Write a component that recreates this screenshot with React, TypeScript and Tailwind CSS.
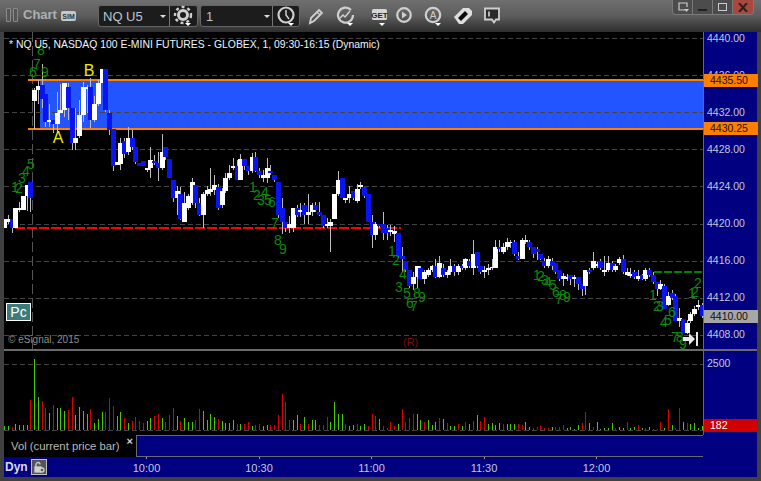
const font = "font-['Liberation_Sans',Arial,sans-serif]";

// [white?, body top, body bottom, wick high, wick low] in page pixels
const candles: number[][] = [
  [1, 219, 228], [1, 219, 222, 215, 224], [0, 219, 228, 219, 233], [1, 208, 228], [1, 208, 210, 202, 212], [1, 196, 210], [1, 185, 196, 185, 211], [0, 182, 198, 182, 212],
  [1, 90, 101, 88, 129], [1, 86, 90, 80, 104], [0, 85, 99, 64, 108], [0, 94, 122, 94, 127], [1, 120, 122, 104, 127], [0, 120, 124, 120, 133], [1, 113, 124, 92, 133], [1, 110, 113, 84, 113],
  [1, 83, 110, 83, 117], [0, 87, 108, 83, 120], [0, 108, 143, 108, 150], [1, 138, 143, 108, 150], [1, 115, 136, 100, 138], [1, 87, 115, 82, 122], [1, 87, 89, 85, 113], [0, 87, 120, 78, 128],
  [1, 104, 120, 96, 122], [1, 83, 104, 80, 106], [1, 69, 83], [0, 69, 110, 69, 112], [0, 113, 130, 110, 135], [0, 129, 166, 129, 171], [1, 162, 165], [1, 143, 164, 138, 170],
  [0, 141, 154, 138, 158], [1, 138, 152, 127, 155], [0, 138, 147, 130, 150], [0, 147, 162, 147, 164], [0, 163, 166], [0, 161, 166], [1, 168, 170, 168, 172], [1, 160, 168, 147, 178],
  [0, 161, 163, 155, 165], [0, 163, 168, 152, 181], [1, 152, 168, 134, 170], [0, 147, 157, 147, 160], [0, 159, 178], [0, 180, 198, 180, 202], [1, 191, 198, 186, 215], [0, 194, 219, 187, 220],
  [1, 203, 222, 192, 222], [1, 196, 208, 194, 210], [1, 182, 203, 178, 205], [0, 185, 203, 185, 208], [0, 203, 215, 198, 216], [1, 194, 215, 192, 228], [1, 190, 194, 186, 196], [1, 189, 192, 168, 196],
  [1, 185, 190, 175, 195], [0, 187, 208, 184, 210], [1, 191, 205, 188, 208], [1, 178, 191, 173, 193], [1, 173, 178, 165, 180], [1, 166, 168, 158, 170], [0, 166, 180, 160, 180], [1, 159, 180, 154, 180],
  [0, 159, 166, 159, 170], [0, 166, 171, 166, 175], [1, 157, 171, 153, 173], [0, 157, 171, 152, 172], [0, 171, 175, 168, 178], [1, 175, 178, 170, 182], [1, 168, 178, 158, 183], [0, 171, 173, 165, 175],
  [0, 175, 180, 175, 182], [0, 182, 215, 182, 218], [0, 208, 222, 198, 234], [0, 222, 228, 222, 232], [1, 224, 228, 216, 233], [1, 208, 228, 208, 232], [0, 208, 215, 205, 217], [1, 210, 212, 203, 217],
  [0, 205, 215, 203, 224], [1, 212, 215, 194, 224], [1, 205, 212, 203, 216], [0, 205, 210, 202, 212], [0, 212, 215, 202, 216], [0, 215, 226, 215, 228], [1, 224, 226, 218, 228], [1, 222, 226, 219, 252],
  [1, 194, 219, 194, 219], [1, 180, 194, 171, 196], [0, 178, 198, 178, 198], [1, 198, 200, 198, 203], [1, 194, 198, 186, 203], [0, 191, 198, 191, 200], [1, 189, 201, 184, 203], [1, 185, 187, 182, 189],
  [0, 187, 196, 187, 198], [0, 194, 222, 194, 222], [0, 222, 235, 215, 248], [1, 224, 235, 222, 240], [0, 224, 226, 224, 228], [0, 224, 233, 212, 240], [0, 228, 233, 225, 240], [1, 230, 232, 225, 236],
  [1, 231, 234, 226, 242], [0, 233, 256, 233, 258], [0, 256, 259, 247, 272], [0, 261, 270, 261, 272], [0, 270, 286, 270, 288], [1, 277, 284, 272, 290], [1, 266, 277, 266, 288], [0, 268, 279, 266, 279],
  [1, 272, 279, 270, 284], [1, 270, 275, 268, 277], [1, 266, 270, 265, 272], [0, 266, 277, 259, 278], [1, 263, 277, 256, 278], [0, 268, 275, 264, 277], [1, 272, 275, 270, 278], [1, 266, 272, 259, 275],
  [0, 266, 272, 264, 276], [1, 266, 272, 264, 275], [0, 266, 268, 264, 270], [1, 259, 268, 258, 270], [0, 261, 266, 259, 268], [1, 254, 268, 240, 275], [0, 252, 266, 252, 268], [0, 266, 272, 266, 274],
  [1, 270, 272, 266, 278], [1, 268, 270, 264, 275], [1, 267, 268, 259, 270], [1, 247, 268, 240, 268], [0, 247, 249, 240, 252], [1, 247, 252, 243, 254], [1, 242, 247, 238, 250], [1, 242, 243, 240, 248],
  [0, 242, 254, 240, 256], [0, 256, 259, 252, 260], [1, 240, 259, 238, 259], [1, 240, 242, 235, 244], [0, 242, 247, 240, 250], [0, 247, 254, 247, 258], [0, 249, 252, 247, 260], [0, 254, 259, 254, 260],
  [0, 261, 266, 258, 268], [1, 259, 266, 256, 268], [0, 261, 266, 258, 270], [0, 263, 272, 263, 274], [0, 270, 279, 270, 281], [1, 276, 279, 273, 286], [1, 277, 279, 274, 281], [0, 275, 279, 275, 285],
  [1, 277, 279, 275, 287], [0, 277, 284, 277, 290], [0, 284, 289, 284, 296], [1, 270, 286, 270, 295], [0, 270, 272, 268, 274], [1, 261, 268, 252, 270], [1, 264, 266, 262, 268], [0, 261, 268, 259, 270],
  [1, 270, 272, 256, 276], [1, 263, 270, 256, 272], [0, 263, 270, 261, 272], [1, 266, 270, 264, 272], [1, 259, 263, 257, 265], [0, 259, 272, 255, 274], [1, 272, 275, 268, 276], [1, 274, 276, 268, 278],
  [0, 272, 277, 270, 279], [1, 276, 279, 270, 281], [0, 275, 279, 274, 280], [1, 270, 279, 268, 281], [0, 270, 275, 268, 277], [0, 275, 282, 272, 284], [0, 282, 289, 282, 296], [1, 284, 289, 280, 290],
  [0, 286, 309, 284, 309], [1, 296, 305, 292, 306], [0, 293, 298, 290, 300], [0, 296, 321, 294, 321], [1, 318, 321, 308, 327], [0, 319, 333, 319, 333], [1, 323, 333, 320, 334], [1, 314, 321, 312, 323],
  [1, 309, 314, 306, 316], [1, 305, 307, 300, 310], [0, 305, 316, 303, 318],
];

// positive = green bar, negative = red bar
const volumes = [
  4, 4, -3, 6, 5, 5, 5, -30, 71, 33, -29, -22, 17, -25, 22, 22, 19, -20, -33, 15, 23, 19, 16, -21, 7, 11, 18, -18, -32, -24, 14, 18, -12, 7, -9, -13, -9, -7, 9, 12, -14, -16, 12, -8, -15, -22, 14, -9, 12, 8, 8, -10, -21, 19, 10, 16, 13, -11, 9, 7, 7, 10, -6, 6, -6, -8, 4, -5, -6, 4, 5, -5, -5, -15, -36, -28, -10, 10, 15, -6, 13, -6, 10, 10, -5, -5, -13, 8, 28, 16, 16, -6, 4, 5, -6, 4,
  6, -4, -16, -14, 11, -4, -2, -8, -4, 6, -21, -8, -12, -16, 16, 10, -8, 10, 5, 8, -12, 11, -7, 4, 4, -6, 4, -8, 6, -9, 15, -9, -13, 6, 7, 5, 7, -6, 6, 6, 6, -6, -5, 8, 3, -2, -3, -4, -2, -2, 3, -3, -3, -5, 2, 3, 1, 5, -7, -18, 7, -3, 8, 1, 2, 2, 7, -2, 3, 2, -8, 2, 3, -5, 2, -2, 3, -1, -1, -8, 2, -21, 5, -2, -22, 8, -7, 6, 7, 2, 4,
];

const barX = (i: number) => Math.floor(4.5 + 3.75 * i);

// TD-style count digits: [digit, centre x, bottom y]
const counts: [string, number, number][] = [
  ["8", 41, 55], ["7", 37, 69], ["6", 33, 77], ["9", 45, 77],
  ["5", 31, 169], ["4", 26, 176], ["3", 22, 183], ["1", 15, 192], ["2", 19, 193],
  ["1", 253, 192], ["2", 257, 200], ["4", 265, 197], ["3", 261, 205], ["5", 268, 205], ["6", 272, 207], ["7", 275, 228], ["8", 278, 245], ["9", 283, 254],
  ["1", 392, 256], ["2", 396, 265], ["4", 403, 279], ["3", 399, 292], ["5", 407, 298], ["8", 417, 298], ["9", 422, 302], ["6", 410, 308], ["7", 414, 311],
  ["1", 537, 280], ["2", 541, 281], ["3", 545, 285], ["4", 548, 287], ["5", 553, 290], ["6", 556, 297], ["8", 563, 300], ["9", 567, 302], ["7", 559, 304],
  ["1", 653, 300], ["2", 657, 311], ["3", 660, 311], ["6", 672, 317], ["5", 668, 325], ["4", 664, 327], ["7", 675, 342], ["8", 680, 342], ["9", 683, 349],
  ["1", 692, 298], ["2", 695, 297], ["2", 698, 288],
];

const priceTicks = [4440, 4436, 4432, 4428, 4424, 4420, 4416, 4412, 4408];
const priceY = (p: number) => 38.5 + (4440 - p) * 9.28;

function Caret({ x, y }: { x: number; y: number }) {
  return <path d={`M${x} ${y}h6l-3 3z`} fill="#ffffff" stroke="none" />;
}

function ToolIcon({ w = 26, children }: { w?: number; children: React.ReactNode }) {
  return (
    <svg width={w} height={22} viewBox={`0 0 ${w} 22`} fill="none" stroke="#cfcfcf" strokeWidth={2.2}>
      {children}
    </svg>
  );
}

function PriceFlag({ top, bg, text, color }: { top: number; bg: string; text: string; color: string }) {
  return (
    <div className={`absolute left-0 flex h-[13px] w-[54px] items-center ${bg}`} style={{ top }}>
      <div className={`absolute left-[-1px] top-0 h-[13px] w-[7px] [clip-path:polygon(0_50%,100%_0,100%_100%)] ${bg}`} />
      <span className={`pl-[6px] text-[10.5px] leading-none ${color}`}>{text}</span>
    </div>
  );
}

export default function App() {
  return (
    <div className={`flex h-[481px] w-[761px] flex-col overflow-hidden bg-[#404040] ${font}`}>
      {/* Title bar */}
      <header className="relative flex h-[32px] shrink-0 items-start bg-gradient-to-b from-[#6f6f6f] via-[#5c5c5c] to-[#2e2e2e] pl-[6px]">
        <div className="mt-[8px] flex gap-[2px]">
          <div className="h-[14px] w-[5px] rounded-[1px] border border-[#8a8a8a] bg-[#555555]" />
          <div className="h-[14px] w-[5px] rounded-[1px] border border-[#8a8a8a] bg-[#555555]" />
        </div>
        <span className="ml-[5px] mt-[7px] w-[38px] text-[13px] font-bold leading-4 text-[#a9b0b4]">Chart</span>
        <span className="mt-[11px] flex h-[10px] w-[15px] items-center justify-center rounded-[2px] bg-[#c8c8c8] text-[7px] font-bold leading-none text-[#333333]">SIM</span>

        <div className="ml-[22px] mt-[5px] flex h-[22px] w-[100px] items-center rounded-[3px] border border-[#666666] bg-[#1c1c1c]">
          <span className="w-[60px] pl-[4px] text-[13px] leading-none text-[#b9c6d0]">NQ U5</span>
          <svg width={8} height={20}><path d="M1 9h6l-3 3z" fill="#e0e0e0" /></svg>
          <div className="ml-[2px] h-[20px] w-px bg-[#777777]" />
          <ToolIcon>
            <circle cx={13} cy={10} r={4.5} strokeWidth={3} />
            <circle cx={13} cy={10} r={8} strokeWidth={2.4} strokeDasharray="3 3" />
            <Caret x={15} y={18} />
          </ToolIcon>
        </div>
        <div className="ml-[2px] mt-[5px] flex h-[22px] w-[100px] items-center rounded-[3px] border border-[#666666] bg-[#1c1c1c]">
          <span className="w-[62px] pl-[5px] text-[13px] leading-none text-[#b9c6d0]">1</span>
          <svg width={8} height={20}><path d="M1 9h6l-3 3z" fill="#e0e0e0" /></svg>
          <div className="ml-[1px] h-[20px] w-px bg-[#777777]" />
          <ToolIcon>
            <circle cx={13} cy={10} r={7.5} />
            <path d="M13 5v5l3 4" strokeWidth={1.5} />
            <Caret x={15} y={18} />
          </ToolIcon>
        </div>

        <div className="ml-[3px] mt-[5px] flex h-[22px] items-center">
          <ToolIcon>
            <path d="M7 18l1-5 8-8 3 3-8 8z" strokeWidth={1.8} />
            <path d="M14 7l3 3" strokeWidth={1.2} />
          </ToolIcon>
          <div className="w-[3px]" />
          <ToolIcon>
            <path d="M19 5a7.5 7.5 0 1 0 2 5" />
            <path d="M8 13l3-3 2 2 5-6" strokeWidth={1.5} />
            <Caret x={15} y={18} />
          </ToolIcon>
          <div className="w-[12px]" />
          <ToolIcon>
            <rect x={2} y={4} width={15} height={11} rx={1.5} fill="#d6d6d6" stroke="none" />
            <text x={9.5} y={13} textAnchor="middle" fontSize={8} fontWeight={700} fill="#222222" stroke="none">GET</text>
            <Caret x={9} y={18} />
          </ToolIcon>
          <ToolIcon>
            <circle cx={8} cy={10} r={6.8} />
            <path d="M6 6.5l5 3.5-5 3.5z" fill="#cfcfcf" stroke="none" />
          </ToolIcon>
          <ToolIcon w={25}>
            <circle cx={11} cy={10} r={7.2} />
            <text x={11} y={14} textAnchor="middle" fontSize={10} fill="#cfcfcf" stroke="none">A</text>
            <Caret x={13} y={18} />
          </ToolIcon>
          <div className="w-[4px]" />
          <ToolIcon>
            <path d="M3 12l9-9h6l3 3v4l-9 9H8z" fill="#dedede" stroke="none" />
            <path d="M7 13l7-7 3 3-7 7z" fill="#0c0c0c" stroke="none" />
          </ToolIcon>
          <div className="w-[3px]" />
          <ToolIcon>
            <path d="M5 3.5h14v11h-3l-2 3-2-3H5z" strokeWidth={1.8} fill="#2b2b2b" />
            <path d="M9 6.5v5" strokeWidth={1.4} stroke="#f0f0f0" />
          </ToolIcon>
        </div>

        {/* Window buttons */}
        <div className="absolute right-[7px] top-0 flex h-[15px] overflow-hidden rounded-b-[4px] border border-t-0 border-[#7a7a7a]">
          <div className="flex w-[20px] items-center justify-center border-r border-[#7a7a7a] bg-[#4c4c4c]">
            <svg width={12} height={12} fill="none" stroke="#cccccc" strokeWidth={1.2}>
              <path d="M8 9H2V2h8v4" /><path d="M7 8h5l-2.5 3z" fill="#cccccc" stroke="none" />
            </svg>
          </div>
          <div className="flex w-[20px] items-end justify-center border-r border-[#7a7a7a] bg-[#4c4c4c] pb-[3px]">
            <div className="h-[2px] w-[9px] bg-[#222222]" />
          </div>
          <div className="flex w-[20px] items-center justify-center border-r border-[#7a7a7a] bg-[#4c4c4c]">
            <div className="h-[8px] w-[9px] border border-[#cccccc]" />
          </div>
          <div className="flex w-[20px] items-center justify-center bg-[#a9483e]">
            <svg width={10} height={9} stroke="#2a2020" strokeWidth={2}><path d="M1 0l8 9M9 0l-8 9" /></svg>
          </div>
        </div>
      </header>

      <div className="flex flex-1 flex-col px-[4px]">
        {/* Price pane */}
        <div className="flex h-[317px] shrink-0">
          <div className="relative h-[317px] w-[699px] bg-black">
            <svg width={699} height={317} viewBox="4 32 699 317" className="block">
              <rect x={40} y={81} width={663} height={47} fill="#2255ff" shapeRendering="crispEdges" />
              {priceTicks.map((p) => (
                <line key={p} x1={4} x2={703} y1={Math.floor(priceY(p)) + 0.5} y2={Math.floor(priceY(p)) + 0.5} stroke="#444444" strokeDasharray="5 3" />
              ))}
              <line x1={32.5} x2={32.5} y1={32} y2={349} stroke="#555555" strokeDasharray="10 4" />
              <rect x={28} y={79} width={675} height={2} fill="#ff8000" shapeRendering="crispEdges" />
              <rect x={28} y={128} width={675} height={2} fill="#ff8000" shapeRendering="crispEdges" />
              <line x1={15} x2={401} y1={228} y2={228} stroke="#ff0000" strokeWidth={2} strokeDasharray="10 2" />
              <line x1={654} x2={703} y1={272} y2={272} stroke="#008000" strokeWidth={2} strokeDasharray="8 2" />
              <g shapeRendering="crispEdges">
                {candles.map(([w, top, bot, hi, lo], i) => (
                  <g key={i}>
                    {hi !== undefined && <rect x={barX(i)} y={hi} width={1} height={lo - hi} fill="#bdbdbd" />}
                    <rect x={barX(i) - 2} y={top} width={5} height={bot - top} fill={w ? "#ffffff" : "#0a14f0"} />
                  </g>
                ))}
              </g>
              <g fontSize={14} fill="#0b8a0b" textAnchor="middle">
                {counts.map(([d, x, y], i) => (
                  <text key={i} x={x} y={y}>{d}</text>
                ))}
              </g>
              <g fontSize={16} fill="#eded00" textAnchor="middle">
                <text x={58} y={143}>A</text>
                <text x={89} y={76}>B</text>
              </g>
              <path d="M683 337h6v-4l6 6-6 6v-4h-6z" fill="#e8e8e8" />
              <rect x={696} y={332} width={2} height={14} fill="#e8e8e8" />
            </svg>
            <div className="absolute left-[5px] top-[6px] text-[10.4px] leading-[13px] whitespace-nowrap text-[#eef6ff]">
              * NQ U5, NASDAQ 100 E-MINI FUTURES - GLOBEX, 1, 09:30-16:15 (Dynamic)
            </div>
            <div className="absolute left-[2px] top-[271px] flex h-[18px] w-[25px] items-center justify-center border border-white bg-[#3d7a7a] text-[14px] leading-none text-white">
              Pc
            </div>
            <div className="absolute left-[4px] top-[302px] text-[10px] leading-[12px] text-[#8c8c8c]">© eSignal, 2015</div>
            <div className="absolute left-[399px] top-[304px] text-[11px] leading-[13px] text-[#7a0f0f]">(R)</div>
          </div>
          <div className="relative w-[54px] border-l border-[#6a6a6a] bg-[#000080]">
            {priceTicks.map((p) => (
              <span key={p} className="absolute left-[3px] text-[10.5px] leading-none text-[#c4c8dc]" style={{ top: priceY(p) - 32 - 6 }}>
                {p}.00
              </span>
            ))}
            <PriceFlag top={42} bg="bg-[#ff8000]" text="4435.50" color="text-[#1a1000]" />
            <PriceFlag top={90} bg="bg-[#ff8000]" text="4430.25" color="text-[#1a1000]" />
            <PriceFlag top={278} bg="bg-[#a6a6a6]" text="4410.00" color="text-[#111111]" />
          </div>
        </div>

        <div className="h-[2px] shrink-0 bg-[#6a6a6a]" />

        {/* Volume pane */}
        <div className="flex h-[84px] shrink-0">
          <div className="h-[84px] w-[699px] bg-black">
            <svg width={699} height={84} viewBox="4 351 699 84" className="block">
              <line x1={4} x2={703} y1={364.5} y2={364.5} stroke="#444444" strokeDasharray="5 3" />
              <line x1={4} x2={703} y1={430.5} y2={430.5} stroke="#444444" strokeDasharray="5 3" />
              <g shapeRendering="crispEdges">
                {volumes.map((v, i) => (
                  <rect key={i} x={barX(i)} y={430 - Math.abs(v)} width={1} height={Math.abs(v)} fill={v > 0 ? "#44cc00" : "#dd0000"} />
                ))}
              </g>
            </svg>
          </div>
          <div className="relative w-[54px] border-l border-[#6a6a6a] bg-[#000080]">
            <span className="absolute left-[3px] top-[7px] text-[10.5px] leading-none text-[#c4c8dc]">2500</span>
            <PriceFlag top={68} bg="bg-[#d00000]" text="182" color="text-white" />
          </div>
        </div>

        {/* Study tab row */}
        <div className="flex h-[22px] shrink-0 bg-[#000080]">
          <div className="relative flex w-[132px] shrink-0 items-center border-t border-[#000000] bg-black pl-[7px]">
            <span className="text-[11.3px] leading-none text-[#b8b8b8]">Vol (current price bar)</span>
            <span className="absolute right-[3px] top-[-1px] text-[11px] font-bold leading-[13px] text-[#d0d0d0]">×</span>
          </div>
          <div className="w-[567px] border-b border-l border-t border-[#6a6a6a]" />
        </div>

        {/* Time axis */}
        <div className="relative flex h-[20px] shrink-0 items-center bg-[#000080]">
          <span className="ml-[1px] text-[12px] font-bold leading-none text-[#d8d8e8]">Dyn</span>
          <div className="ml-[3px] flex h-[16px] w-[16px] items-center justify-center border border-[#c0c0c0] bg-[#555555]">
            <svg width={12} height={12} fill="none" stroke="#d0d0d0" strokeWidth={1.3}>
              <path d="M3 6V3.5a2 2 0 0 1 4 0" /><rect x={2} y={6} width={6} height={5} fill="#d0d0d0" /><circle cx={9} cy={9} r={2} fill="#555555" />
            </svg>
          </div>
          {["10:00", "10:30", "11:00", "11:30", "12:00"].map((t, i) => (
            <div key={t} className="absolute top-0 w-[40px] text-center" style={{ left: 122.5 + i * 112.5 }}>
              <div className="mx-auto h-[2px] w-px bg-[#a0a0a0]" />
              <span className="mt-[4px] block text-[11px] leading-none text-[#c4c8dc]">{t}</span>
            </div>
          ))}
        </div>
      </div>
    </div>
  );
}
